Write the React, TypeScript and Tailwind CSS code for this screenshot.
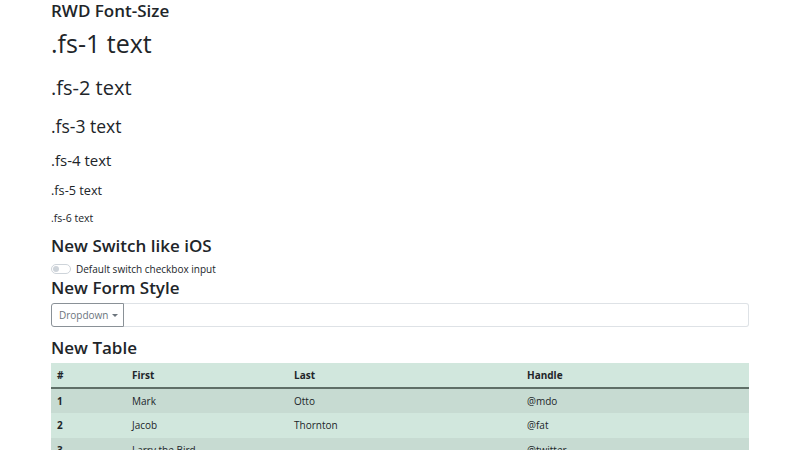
export default function App() {
  const rows = [
    { id: 1, first: "Mark", last: "Otto", handle: "@mdo" },
    { id: 2, first: "Jacob", last: "Thornton", handle: "@fat" },
    { id: 3, first: "Larry the Bird", last: "", handle: "@twitter" },
  ];

  return (
    <div className="h-[450px] overflow-hidden bg-white text-[#212529] font-['Open_Sans',sans-serif]">
      <div className="mx-[51px] flex flex-col">
        <h5 className="mt-[0px] text-[17px] leading-[22px] font-semibold">RWD Font-Size</h5>
        <div className="mt-[6px] text-[25px] leading-[30px]">.fs-1 text</div>
        <div className="mt-[18px] text-[20px] leading-[24px]">.fs-2 text</div>
        <div className="mt-[14px] text-[17.5px] leading-[24px]">.fs-3 text</div>
        <div className="mt-[11px] text-[15px] leading-[22px]">.fs-4 text</div>
        <div className="mt-[9px] text-[12.7px] leading-[20px]">.fs-5 text</div>
        <div className="mt-[10px] text-[10.5px] leading-[16px]">.fs-6 text</div>

        <h4 className="mt-[8px] text-[17px] leading-[24px] font-semibold">New Switch like iOS</h4>
        <label className="mt-[4px] flex items-center gap-[5px] text-[10px] leading-[14px]">
          <span className="relative h-[10px] w-[20px] rounded-full border border-[#ced4da] bg-white">
            <span className="absolute left-[1px] top-[1px] h-[6px] w-[6px] rounded-full bg-[#ced4da]" />
          </span>
          Default switch checkbox input
        </label>

        <h4 className="mt-[0px] text-[17px] leading-[24px] font-semibold">New Form Style</h4>
        <div className="mt-[3px] flex h-[24px]">
          <button className="flex items-center gap-[3px] rounded-l-[3px] border border-[#8a9197] pl-[7px] pr-[5px] text-[10px] text-[#6c757d]">
            Dropdown
            <svg width="6" height="3" viewBox="0 0 6 3"><path d="M0 0h6L3 3z" fill="#6c757d" /></svg>
          </button>
          <div className="flex-1 rounded-r-[3px] border border-l-0 border-[#dee2e6] bg-white" />
        </div>

        <h4 className="mt-[9px] text-[17px] leading-[24px] font-semibold">New Table</h4>
        <table className="mt-[3px] w-full border-collapse text-[10px]">
          <thead>
            <tr className="h-[25px] bg-[#d1e7dd] border-b-2 border-[#5f6f67]">
              <th className="w-[73px] px-[6px] text-left font-bold">#</th>
              <th className="w-[162px] px-[8px] text-left font-bold">First</th>
              <th className="w-[233px] px-[8px] text-left font-bold">Last</th>
              <th className="px-[8px] text-left font-bold">Handle</th>
            </tr>
          </thead>
          <tbody>
            {rows.map((r, i) => (
              <tr key={r.id} className={`h-[25px] ${i % 2 === 0 ? "bg-[#c7dbd2]" : "bg-[#d1e7dd]"}`}>
                <td className="px-[6px] font-bold">{r.id}</td>
                <td className="px-[8px]">{r.first}</td>
                <td className="px-[8px]">{r.last}</td>
                <td className="px-[8px]">{r.handle}</td>
              </tr>
            ))}
          </tbody>
        </table>
      </div>
    </div>
  );
}
